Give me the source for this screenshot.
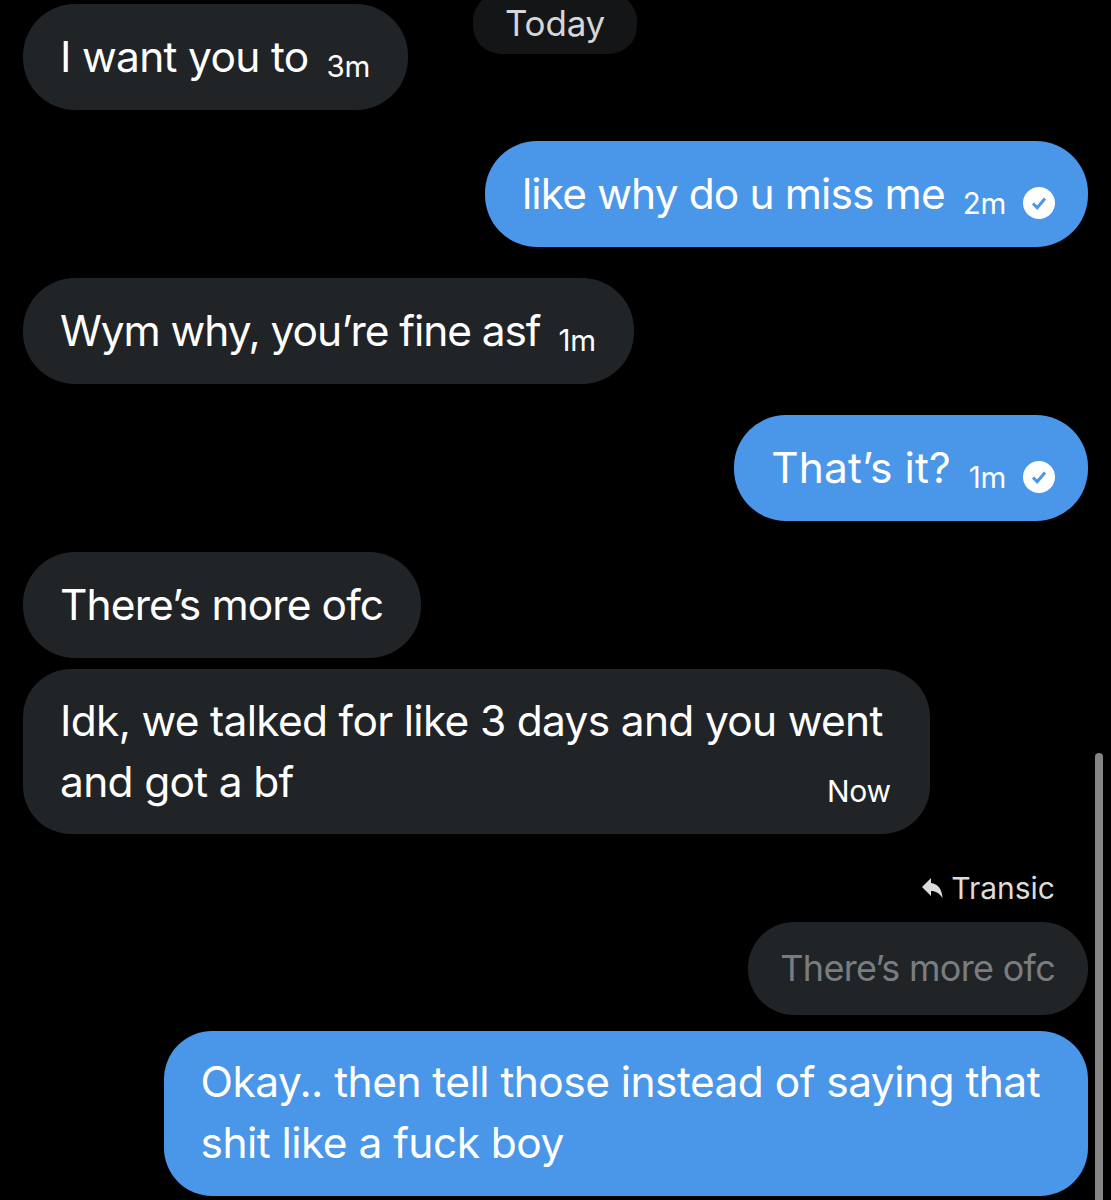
<div class="chat">
	<div class="day">Today</div>

	<div class="bubble in">
		<span class="text">I want you to</span><span class="time">3m</span>
	</div>

	<div class="bubble out gap">
		<span class="text snug">like why do u miss me</span><span class="time">2m</span>
		<svg class="seen" viewBox="0 0 32 32"><circle cx="16" cy="16" r="16" fill="#fff" /><path d="M10 16.5l4.2 4.2L22 11.5" fill="none" stroke="#4a96e8" stroke-width="3" /></svg>
	</div>

	<div class="bubble in gap">
		<span class="text tight">Wym why, you’re fine asf</span><span class="time">1m</span>
	</div>

	<div class="bubble out gap">
		<span class="text loose">That’s it?</span><span class="time">1m</span>
		<svg class="seen" viewBox="0 0 32 32"><circle cx="16" cy="16" r="16" fill="#fff" /><path d="M10 16.5l4.2 4.2L22 11.5" fill="none" stroke="#4a96e8" stroke-width="3" /></svg>
	</div>

	<div class="bubble in gap">
		<span class="text snug">There’s more ofc</span>
	</div>

	<div class="bubble in multi near">
		<div class="text">Idk, we talked for like 3 days and you went<br />and got a bf</div>
		<span class="time now">Now</span>
	</div>

	<div class="reply-label">
		<svg viewBox="0 0 21 20"><path d="M0 9L9 0v5c7 1 11 6 11.500 15C17 15 14 13 9 13v5z" fill="#dcdcdc" /></svg>
		<span>Transic</span>
	</div>
	<div class="quote">There’s more ofc</div>

	<div class="bubble out multi near-quote">
		<div class="text">Okay.. then tell those instead of saying that<br />shit like a fuck boy</div>
	</div>

	<div class="scrollbar"></div>
</div>

<style>
	:global(body) {
		background: #000;
	}

	.chat {
		position: relative;
		display: flex;
		flex-direction: column;
		align-items: flex-start;
		box-sizing: border-box;
		width: 1111px;
		height: 1200px;
		padding: 4px 23px 0;
		overflow: hidden;
		background: #000;
		color: #fff;
		font-family: Inter, 'Liberation Sans', sans-serif;
	}

	.day {
		position: absolute;
		top: -7px;
		left: 473px;
		width: 164px;
		height: 61px;
		border-radius: 28px;
		background: #141516;
		color: #d6d6d6;
		font-size: 35px;
		letter-spacing: -0.2px;
		line-height: 60px;
		text-align: center;
	}

	.bubble {
		display: flex;
		align-items: center;
		box-sizing: border-box;
		height: 105.5px;
		padding: 0 38px 1px 37px;
		border-radius: 52px;
		background: #212427;
		font-size: 42.5px;
		letter-spacing: -0.7px;
		white-space: nowrap;
	}

	.out {
		align-self: flex-end;
		padding-right: 33px;
		background: #4a96e8;
	}

	.gap {
		margin-top: 31.5px;
	}

	.near {
		margin-top: 11px;
	}

	.snug {
		letter-spacing: -0.9px;
	}

	.tight {
		letter-spacing: -1.1px;
	}

	.loose {
		letter-spacing: 0.1px;
	}

	.time {
		margin: 19px 0 0 18px;
		font-size: 29.5px;
		letter-spacing: -0.3px;
	}

	.seen {
		width: 32px;
		height: 32px;
		margin: 19px 0 0 17px;
	}

	.multi {
		display: block;
		position: relative;
		height: 165px;
		padding: 21px 47px 0 37px;
		border-radius: 48px;
		line-height: 61px;
	}

	.now {
		position: absolute;
		right: 39px;
		bottom: 25px;
		margin: 0;
		font-size: 30px;
		line-height: 36px;
	}

	.reply-label {
		display: flex;
		align-items: center;
		align-self: flex-end;
		gap: 8px;
		margin: 35px 33px 0 0;
		color: #dcdcdc;
		font-size: 30px;
		line-height: 38px;
	}

	.reply-label svg {
		width: 21px;
		height: 20px;
	}

	.quote {
		align-self: flex-end;
		box-sizing: border-box;
		height: 93px;
		margin-top: 15px;
		padding: 0 33px 0 32px;
		border-radius: 46px;
		background: #212427;
		color: #7a7d80;
		font-size: 36px;
		letter-spacing: -0.7px;
		line-height: 93px;
	}

	.near-quote {
		margin-top: 16px;
		padding: 20px 48px 0 37px;
		letter-spacing: -0.55px;
	}

	.scrollbar {
		position: absolute;
		top: 753px;
		left: 1095px;
		width: 8px;
		height: 460px;
		border-radius: 4px;
		background: #858585;
	}
</style>
